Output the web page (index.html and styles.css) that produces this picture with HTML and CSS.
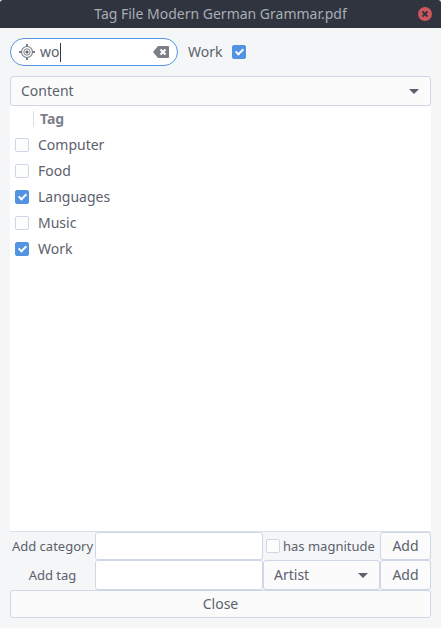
FILE: index.html
```html
<!DOCTYPE html>
<html lang="en">
<head>
<meta charset="utf-8">
<meta name="viewport" content="width=device-width, initial-scale=1">
<title>Tag File Modern German Grammar.pdf</title>
<link rel="stylesheet" href="styles.css">
</head>
<body>
<div class="window">
  <header class="titlebar">
    <h1 class="title">Tag File Modern German Grammar.pdf</h1>
    <button class="window-close" type="button" aria-label="Close window">
      <svg viewBox="0 0 14 14" width="14" height="14"><circle cx="7" cy="7" r="7" fill="#cc575d"/><path d="M4.500 4.500l5 5M9.500 4.500l-5 5" stroke="#2f343f" stroke-width="1.800"/></svg>
    </button>
  </header>
  <main class="content">
    <div class="search-row">
      <div class="search">
        <svg class="search-icon" viewBox="0 0 16 16" width="16" height="16" fill="none" stroke="#7c7f87"><circle cx="8" cy="8" r="5.500" stroke-width="1.200"/><circle cx="8" cy="8" r="3.200"/><circle cx="8" cy="8" r="1.600" fill="#5c616c" stroke="none"/><path d="M8 0v3M8 13v3M0 8h3M13 8h3" stroke-width="2"/></svg>
        <input class="search-input" type="text" value="wo" aria-label="Search tags">
        <span class="caret"></span>
        <button class="clear" type="button" aria-label="Clear">
          <svg viewBox="0 0 16 12" width="16" height="12"><path d="M5 0h10a1 1 0 0 1 1 1v10a1 1 0 0 1-1 1H5L0 6z" fill="#7c7f87"/><path d="M7.500 3.500l5 5M12.500 3.500l-5 5" stroke="#fff" stroke-width="2"/></svg>
        </button>
      </div>
      <label class="match" for="match">Work</label>
      <input class="check" type="checkbox" id="match" checked>
    </div>
    <div class="dropdown">
      <select class="select" aria-label="Category">
        <option>Content</option>
      </select>
      <svg class="arrow" viewBox="0 0 10 5" width="10" height="5"><path d="M0 0h10L5 5z" fill="#5c616c"/></svg>
    </div>
    <div class="list">
      <table class="tags">
        <thead><tr><th class="tick"></th><th><span class="heading">Tag</span></th></tr></thead>
        <tbody>
          <tr><td class="tick"><input class="check" type="checkbox" id="computer"></td><td><label for="computer">Computer</label></td></tr>
          <tr><td class="tick"><input class="check" type="checkbox" id="food"></td><td><label for="food">Food</label></td></tr>
          <tr><td class="tick"><input class="check" type="checkbox" id="languages" checked></td><td><label for="languages">Languages</label></td></tr>
          <tr><td class="tick"><input class="check" type="checkbox" id="music"></td><td><label for="music">Music</label></td></tr>
          <tr><td class="tick"><input class="check" type="checkbox" id="work" checked></td><td><label for="work">Work</label></td></tr>
        </tbody>
      </table>
    </div>
    <div class="form">
      <label class="form-label" for="category">Add category</label>
      <input class="entry" type="text" id="category">
      <div class="magnitude">
        <input class="check" type="checkbox" id="magnitude">
        <label for="magnitude">has magnitude</label>
      </div>
      <button class="button" type="button">Add</button>
      <label class="form-label" for="tag">Add tag</label>
      <input class="entry" type="text" id="tag">
      <div class="dropdown">
        <select class="select" aria-label="Tag category">
          <option>Artist</option>
        </select>
        <svg class="arrow" viewBox="0 0 10 5" width="10" height="5"><path d="M0 0h10L5 5z" fill="#5c616c"/></svg>
      </div>
      <button class="button" type="button">Add</button>
    </div>
    <button class="button close" type="button">Close</button>
  </main>
</div>
</body>
</html>
```
FILE: styles.css
```css
*, *::before, *::after { box-sizing: border-box; }

body {
  margin: 0;
  background: #f5f6f7;
  color: #5c616c;
  font: 14px/20px "Noto Sans", sans-serif;
}

input, select, button {
  margin: 0;
  font: inherit;
  color: inherit;
}

.window {
  display: flex;
  flex-direction: column;
  min-height: 100vh;
}

.titlebar {
  display: grid;
  grid-template-columns: 14px 1fr 14px;
  align-items: center;
  height: 28px;
  padding: 0 9px;
  background: #2f343f;
  border-radius: 3px 3px 0 0;
}

.title {
  grid-column: 2;
  margin: 0;
  font-size: 14px;
  font-weight: 400;
  text-align: center;
  white-space: nowrap;
  color: #a9adb5;
}

.window-close, .clear {
  display: flex;
  padding: 0;
  border: 0;
  background: none;
}

.content {
  display: flex;
  flex: 1;
  flex-direction: column;
  padding: 10px;
}

.search-row {
  display: flex;
  align-items: center;
  margin-bottom: 10px;
}

.search {
  position: relative;
  display: flex;
  align-items: center;
  width: 168px;
  height: 28px;
  padding: 0 8px;
  border: 1px solid #5294e2;
  border-radius: 14px;
  background: #fff;
}

.search-input {
  flex: 1;
  min-width: 0;
  padding: 0 0 0 5px;
  border: 0;
  outline: 0;
  background: none;
}

.caret {
  position: absolute;
  top: 4px;
  left: 49px;
  width: 1px;
  height: 19px;
  background: #33363d;
}

.match { margin: 0 10px; }

.check {
  display: block;
  appearance: none;
  flex: none;
  width: 14px;
  height: 14px;
  border: 1px solid #cfd6e6;
  border-radius: 2px;
  background: #fcfdfd;
}

.check:checked {
  border-color: #5294e2;
  background: #5294e2;
}

.check:checked::before {
  content: "";
  display: block;
  width: 5px;
  height: 8px;
  margin: 1px 0 0 4px;
  border: solid #fff;
  border-width: 0 2px 2px 0;
  transform: rotate(45deg);
}

.dropdown {
  display: grid;
  align-items: center;
  height: 30px;
}

.select {
  grid-area: 1 / 1;
  appearance: none;
  width: 100%;
  height: 100%;
  padding: 0 28px 0 10px;
  border: 1px solid #cfd6e6;
  border-radius: 3px;
  background: #fbfbfc;
}

.arrow {
  grid-area: 1 / 1;
  justify-self: end;
  margin-right: 12px;
  pointer-events: none;
}

.list {
  flex: 1;
  border-bottom: 1px solid #dcdfe3;
  background: #fff;
}

.tags {
  width: 100%;
  border-collapse: collapse;
}

.tags th, .tags td {
  height: 26px;
  padding: 0 4px;
  text-align: left;
}

.tags .tick {
  width: 24px;
  padding: 0 5px;
}

.tags th { padding: 0; }

.heading {
  display: block;
  height: 16px;
  margin-left: -1px;
  padding-left: 6px;
  border-left: 1px solid #dcdfe3;
  line-height: 16px;
  color: #7c7f87;
}

.form {
  display: grid;
  grid-template-columns: 85px minmax(0, 168fr) minmax(0, 117fr) 51px;
  grid-template-rows: 28px 30px;
}

.form-label {
  align-self: center;
  font-size: 13px;
  text-align: center;
  white-space: nowrap;
}

.entry {
  width: 100%;
  min-width: 0;
  padding: 0 8px;
  border: 1px solid #cfd6e6;
  border-radius: 3px;
  background: #fff;
}

.magnitude {
  display: flex;
  align-items: center;
  gap: 3px;
  padding-left: 3px;
  font-size: 13px;
  white-space: nowrap;
}

.button {
  padding: 0;
  border: 1px solid #cfd6e6;
  border-radius: 3px;
  background: #fbfbfc;
}

.close { height: 28px; }
```
